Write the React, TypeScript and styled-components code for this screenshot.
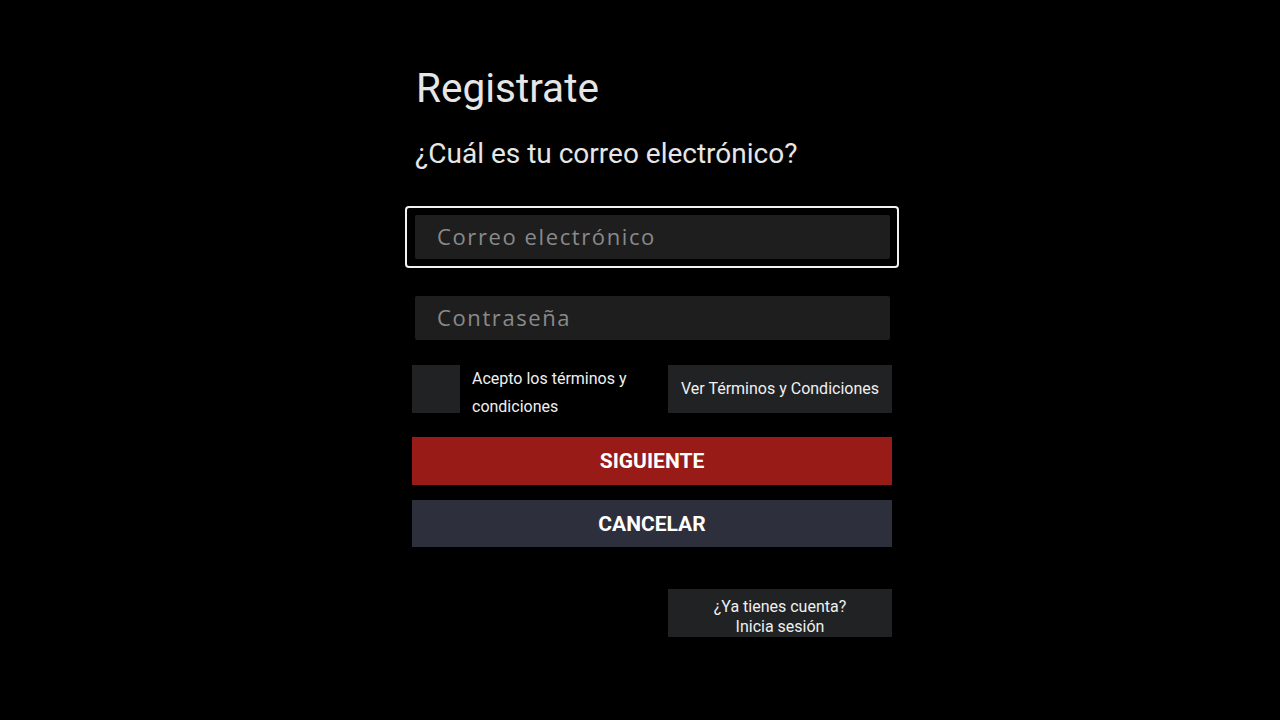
import React from 'react';
import styled, { createGlobalStyle } from 'styled-components';

const GlobalStyle = createGlobalStyle`
  html, body {
    margin: 0;
    padding: 0;
    background: #000;
    height: 100%;
  }
  body {
    font-family: Roboto, 'Liberation Sans', sans-serif;
  }
`;

const Page = styled.div`
  width: 1280px;
  height: 720px;
  box-sizing: border-box;
  padding-left: 24px;
  background: #000;
  display: flex;
  justify-content: center;
`;

const Form = styled.div`
  width: 480px;
  padding-top: 64px;
  display: flex;
  flex-direction: column;
`;

const Title = styled.h1`
  margin: 0 0 0 4px;
  font-size: 40.5px;
  font-weight: 400;
  line-height: 48px;
  color: #e6e6e6;
`;

const Subtitle = styled.h2`
  margin: 25px 0 0 3px;
  font-size: 28px;
  font-weight: 400;
  line-height: 34px;
  color: #e6e6e6;
`;

const FieldWrap = styled.div<{ $focused?: boolean }>`
  margin: ${(p) => (p.$focused ? '35px -7px 0 -7px' : '28px 0 0 0')};
  padding: ${(p) => (p.$focused ? '7px 7px 7px 8px' : '0 2px 0 3px')};
  border: ${(p) => (p.$focused ? '2px solid #f2f2f2' : '0')};
  border-radius: 4px;
`;

const Input = styled.input`
  display: block;
  box-sizing: border-box;
  width: 100%;
  height: 44px;
  border: 0;
  border-radius: 2px;
  outline: none;
  background: #1e1e1e;
  padding: 0 22px 2px;
  font-family: 'Open Sans', sans-serif;
  font-size: 22px;
  letter-spacing: 1.6px;
  color: #ddd;
  &::placeholder {
    color: #8a8a8a;
  }
`;

const TermsRow = styled.div`
  margin-top: 25px;
  height: 48px;
  display: flex;
  align-items: flex-start;
`;

const CheckBox = styled.div`
  width: 48px;
  height: 48px;
  background: #212224;
  flex-shrink: 0;
`;

const TermsLabel = styled.span`
  margin-left: 12px;
  width: 184px;
  font-size: 16px;
  line-height: 28px;
  color: #f0f0f0;
`;

const SmallButton = styled.button<{ $lowered?: boolean }>`
  margin-left: auto;
  width: 224px;
  height: 48px;
  box-sizing: border-box;
  border: 0;
  background: #212224;
  color: #f0f0f0;
  font-family: Roboto, sans-serif;
  font-size: 16px;
  line-height: 20px;
  padding: ${(p) => (p.$lowered ? '7px 0 0' : '0')};
`;

const WideButton = styled.button<{ $primary?: boolean }>`
  width: 480px;
  height: ${(p) => (p.$primary ? '48px' : '47px')};
  margin-top: ${(p) => (p.$primary ? '24px' : '15px')};
  border: 0;
  background: ${(p) => (p.$primary ? '#991b17' : '#2e2f3d')};
  color: #fff;
  font-family: Roboto, sans-serif;
  font-size: 21px;
  font-weight: 700;
  padding: 0;
`;

const Footer = styled.div`
  margin-top: 42px;
  display: flex;
`;

export default function App() {
  return (
    <>
      <GlobalStyle />
      <Page>
        <Form>
          <Title>Registrate</Title>
          <Subtitle>¿Cuál es tu correo electrónico?</Subtitle>
          <FieldWrap $focused>
            <Input placeholder="Correo electrónico" />
          </FieldWrap>
          <FieldWrap>
            <Input type="password" placeholder="Contraseña" />
          </FieldWrap>
          <TermsRow>
            <CheckBox />
            <TermsLabel>Acepto los términos y condiciones</TermsLabel>
            <SmallButton>Ver Términos y Condiciones</SmallButton>
          </TermsRow>
          <WideButton $primary>SIGUIENTE</WideButton>
          <WideButton>CANCELAR</WideButton>
          <Footer>
            <SmallButton $lowered>
              ¿Ya tienes cuenta?
              <br />
              Inicia sesión
            </SmallButton>
          </Footer>
        </Form>
      </Page>
    </>
  );
}
